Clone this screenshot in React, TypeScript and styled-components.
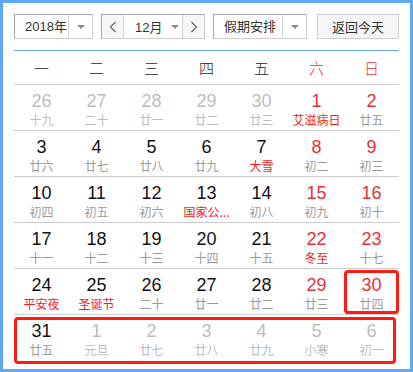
import React from "react";
import styled, { createGlobalStyle } from "styled-components";

const GlobalStyle = createGlobalStyle`
  html, body { margin: 0; padding: 0; background: #fff; }
  body { font-family: "Liberation Sans", "Noto Sans CJK SC", sans-serif; }
  * { box-sizing: border-box; }
`;

const Frame = styled.div`
  width: 413px;
  height: 372px;
  border: 3px solid #5ea9f4;
  padding: 11px 11px 0 11px;
  background: #fff;
`;

const Toolbar = styled.div`
  display: flex;
  height: 25px;
  margin-bottom: 11px;
`;

const Select = styled.div<{ $w: number; $gap: number }>`
  display: flex;
  width: ${(p) => p.$w}px;
  height: 25px;
  margin-right: ${(p) => p.$gap}px;
  border: 1px solid;
  border-color: #a9a9a9 #cdcdcd #cdcdcd #a9a9a9;
  background: #fff;
  font-size: 13px;
  color: #333;
`;

const SelectText = styled.div`
  flex: 1;
  display: flex;
  align-items: center;
  padding-left: 10px;
  line-height: 23px;
`;

const ArrowBox = styled.div`
  width: 24px;
  border-left: 1px solid #d4d4d4;
  display: flex;
  align-items: center;
  justify-content: center;
`;

const Caret = styled.span`
  width: 0;
  height: 0;
  border-left: 4px solid transparent;
  border-right: 4px solid transparent;
  border-top: 4px solid #8a8a8a;
`;

const NavBtn = styled.div`
  width: 22px;
  background: #f6f6f6;
  display: flex;
  align-items: center;
  justify-content: center;
  border-right: 1px solid #d4d4d4;
  &:last-child {
    border-right: none;
    border-left: 1px solid #d4d4d4;
  }
`;

const MonthMid = styled.div`
  flex: 1;
  display: flex;
  align-items: center;
  padding-left: 11px;
  gap: 9px;
`;

const TodayBtn = styled.div`
  width: 82px;
  height: 25px;
  border: 1px solid #cdcdcd;
  background: #f5f5f5;
  font-size: 13px;
  color: #333;
  display: flex;
  align-items: center;
  justify-content: center;
`;

const Table = styled.div`
  width: 385px;
  border-top: 1px solid #62abf3;
`;

const Row = styled.div<{ $h: number; $marked?: boolean }>`
  position: relative;
  display: grid;
  grid-template-columns: repeat(7, 55px);
  height: ${(p) => p.$h}px;
  border-bottom: ${(p) => (p.$marked ? "none" : "1px solid #cccccc")};
  &::after {
    content: "";
    display: ${(p) => (p.$marked ? "block" : "none")};
    position: absolute;
    left: 0;
    right: 3px;
    top: 2px;
    bottom: -3px;
    border: 3px solid #ff1a12;
    border-radius: 4px;
    pointer-events: none;
  }
`;

const WeekDay = styled.div<{ $red?: boolean }>`
  display: flex;
  align-items: center;
  justify-content: center;
  font-size: 15px;
  padding-bottom: 1px;
  color: ${(p) => (p.$red ? "#e8303c" : "#1a1a1a")};
  font-family: "Noto Sans CJK SC", sans-serif;
  font-weight: 300;
`;

const Cell = styled.div<{ $today?: boolean }>`
  position: relative;
  display: flex;
  flex-direction: column;
  align-items: center;
  padding-top: 6px;
  &::after {
    content: "";
    display: ${(p) => (p.$today ? "block" : "none")};
    position: absolute;
    left: 0;
    right: 0;
    top: 1px;
    bottom: 0;
    border: 3px solid #ff1a12;
    border-radius: 4px;
  }
`;

const DayNum = styled.div<{ $color: string }>`
  font-size: 18px;
  line-height: 20px;
  color: ${(p) => p.$color};
  font-family: "Liberation Sans", sans-serif;
`;

const Lunar = styled.div<{ $color: string }>`
  font-size: 12px;
  line-height: 18px;
  white-space: nowrap;
  color: ${(p) => p.$color};
  font-family: "Noto Sans CJK SC", sans-serif;
`;

type Day = { n: number; l: string; other?: boolean; fest?: boolean };

const weeks: Day[][] = [
  [
    { n: 26, l: "十九", other: true },
    { n: 27, l: "二十", other: true },
    { n: 28, l: "廿一", other: true },
    { n: 29, l: "廿二", other: true },
    { n: 30, l: "廿三", other: true },
    { n: 1, l: "艾滋病日", fest: true },
    { n: 2, l: "廿五" },
  ],
  [
    { n: 3, l: "廿六" },
    { n: 4, l: "廿七" },
    { n: 5, l: "廿八" },
    { n: 6, l: "廿九" },
    { n: 7, l: "大雪", fest: true },
    { n: 8, l: "初二" },
    { n: 9, l: "初三" },
  ],
  [
    { n: 10, l: "初四" },
    { n: 11, l: "初五" },
    { n: 12, l: "初六" },
    { n: 13, l: "国家公...", fest: true },
    { n: 14, l: "初八" },
    { n: 15, l: "初九" },
    { n: 16, l: "初十" },
  ],
  [
    { n: 17, l: "十一" },
    { n: 18, l: "十二" },
    { n: 19, l: "十三" },
    { n: 20, l: "十四" },
    { n: 21, l: "十五" },
    { n: 22, l: "冬至", fest: true },
    { n: 23, l: "十七" },
  ],
  [
    { n: 24, l: "平安夜", fest: true },
    { n: 25, l: "圣诞节", fest: true },
    { n: 26, l: "二十" },
    { n: 27, l: "廿一" },
    { n: 28, l: "廿二" },
    { n: 29, l: "廿三" },
    { n: 30, l: "廿四" },
  ],
  [
    { n: 31, l: "廿五" },
    { n: 1, l: "元旦", other: true },
    { n: 2, l: "廿七", other: true },
    { n: 3, l: "廿八", other: true },
    { n: 4, l: "廿九", other: true },
    { n: 5, l: "小寒", other: true },
    { n: 6, l: "初一", other: true },
  ],
];

const head = ["一", "二", "三", "四", "五", "六", "日"];

const Chevron = ({ dir }: { dir: "l" | "r" }) => (
  <svg width="8" height="12" viewBox="0 0 8 12">
    <path
      d={dir === "l" ? "M6.5 1 L1.5 6 L6.5 11" : "M1.5 1 L6.5 6 L1.5 11"}
      fill="none"
      stroke="#666"
      strokeWidth="1.2"
    />
  </svg>
);

export default function App() {
  return (
    <>
      <GlobalStyle />
      <Frame>
        <Toolbar>
          <Select $w={79} $gap={8}>
            <SelectText>2018年</SelectText>
            <ArrowBox>
              <Caret />
            </ArrowBox>
          </Select>
          <Select $w={104} $gap={8}>
            <NavBtn>
              <Chevron dir="l" />
            </NavBtn>
            <MonthMid>
              12月
              <Caret />
            </MonthMid>
            <NavBtn>
              <Chevron dir="r" />
            </NavBtn>
          </Select>
          <Select $w={94} $gap={10}>
            <SelectText>假期安排</SelectText>
            <ArrowBox>
              <Caret />
            </ArrowBox>
          </Select>
          <TodayBtn>返回今天</TodayBtn>
        </Toolbar>
        <Table>
          <Row $h={34}>
            {head.map((h, i) => (
              <WeekDay key={h} $red={i >= 5}>
                {h}
              </WeekDay>
            ))}
          </Row>
          {weeks.map((w, wi) => (
            <Row key={wi} $h={46} $marked={wi === 5}>
              {w.map((d, di) => {
                const weekend = di >= 5;
                const numColor = d.other ? "#bcbcbc" : weekend ? "#e8303c" : "#111";
                const lunarColor = d.other ? "#bcbcbc" : d.fest ? "#f01c24" : "#9a9a9a";
                return (
                  <Cell key={di} $today={wi === 4 && di === 6}>
                    <DayNum $color={numColor}>{d.n}</DayNum>
                    <Lunar $color={lunarColor}>{d.l}</Lunar>
                  </Cell>
                );
              })}
            </Row>
          ))}
        </Table>
      </Frame>
    </>
  );
}
